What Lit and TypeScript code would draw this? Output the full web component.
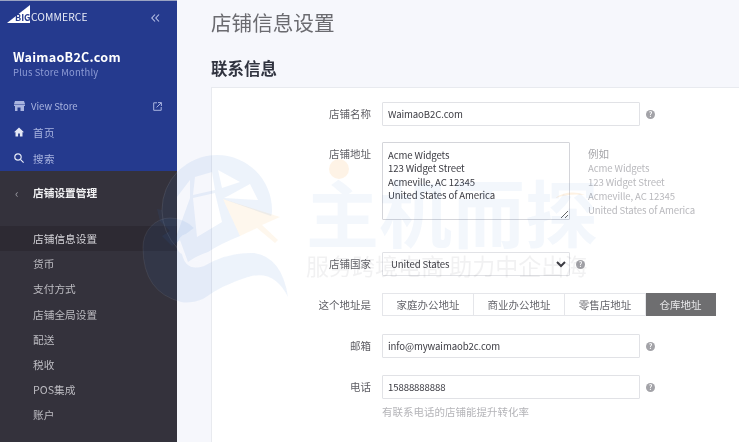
import { LitElement, html, css, svg } from "lit";
import { customElement } from "lit/decorators.js";

const FONT = `"Noto Sans CJK SC", "Noto Sans", sans-serif`;

const watermark = svg`
  <svg class="globe" width="739" height="442" viewBox="0 0 739 442" aria-hidden="true">
    <circle cx="217" cy="210" r="55" fill="none" stroke="#fff" stroke-opacity=".09"/>
    <path fill="#2b78d0" fill-opacity=".085" fill-rule="evenodd" d="M162 210a55 55 0 1 1 110 0q0 5-1 6l-48-17 17 37q-20 8-32 16-12 4-20 10l-8-22-8 6-10-10 8-5-10-10-3-12zM195 177l17-5 3 18-22 5zM218 170l22 12-18 6zM230 195l20-11 8 16-34-2zM193 198l22-5 7 29-25 15zM177 197l13-17v18l-14 39z"/>
    <path fill="#2b78d0" fill-opacity=".085" stroke="#fff" stroke-opacity=".07" d="M143 248a27 29 0 0 1 27-30q14 0 24 10l-8 6q-8 2-9 12 0 6 5 8 4 18 22 12 24-14 50-13 28 4 34 44-14-28-40-20-26 8-45 22-12 5-22 3-38-10-38-54z"/>
    <path fill="#f6a13a" fill-opacity=".09" d="M223 199l57 18-18 8 16 15-3 3-18-15-17 8z"/>
    <circle cx="339" cy="169" r="10" fill="#f6a13a" fill-opacity=".13"/>
    <path fill="#f6a13a" fill-opacity=".14" d="M555 198q14-9 30-3-16-2-30 3z"/>
  </svg>`;

@customElement("app-root")
export class AppRoot extends LitElement {
  static styles = css`
    :host { display: block; width: 739px; height: 442px; overflow: hidden; position: relative; font-family: ${css([FONT] as any)}; filter: blur(.3px); }
    * { box-sizing: border-box; }
    .page { display: flex; height: 442px; background: #f6f7fc; }
    .side { width: 177px; flex: none; display: flex; flex-direction: column; background: #34323c; }
    .blue { height: 171px; background: #253a8e; border-top: 1px solid #9aa3c2; display: flex; flex-direction: column; color: #fff; }
    .brand { display: flex; align-items: center; justify-content: space-between; height: 29px; margin-top: 2px; padding: 0 17px 0 6px; }
    .logo { position: relative; display: flex; align-items: center; width: 90px; height: 20px; }
    .logo svg { position: absolute; left: 1px; top: -3px; }
    .big { position: relative; margin-left: 9px; width: 16px; font-size: 9px; font-weight: 700; color: #253a8e; line-height: 1; }
    .com { position: relative; font-size: 10.3px; letter-spacing: .1px; line-height: 1; color: #e8ebf6; }
    .store { margin: 16px 0 0 13px; font-size: 12.6px; font-weight: 700; line-height: 18px; letter-spacing: .25px; }
    .plan { margin: 0 0 0 13px; font-size: 9.4px; line-height: 12px; color: #8f9dd6; letter-spacing: .2px; }
    .nav { display: flex; align-items: center; gap: 6px; padding: 0 15px 0 14px; height: 26px; color: #a9b4e0; font-size: 9.5px; }
    .nav.first { margin-top: 15px; }
    .nav.cn { gap: 9px; letter-spacing: .4px; font-size: 10.5px; }
    .nav .ext { margin-left: auto; }
    .sub { display: flex; flex-direction: column; }
    .head { display: flex; align-items: center; height: 43px; margin-bottom: 12px; color: #f0f0f2; font-size: 10.7px; font-weight: 700; }
    .back { width: 33px; padding-left: 15px; color: #98979f; font-size: 12px; font-weight: 400; }
    .item { height: 25.2px; padding-left: 33px; display: flex; align-items: center; font-size: 10.7px; color: #bdbcc2; }
    .item.on { background: #2d2a33; color: #d4d3d8; }
    .main { flex: 1; padding-left: 34px; min-width: 0; display: flex; flex-direction: column; }
    h1 { margin: 0; height: 47px; font-size: 20.6px; line-height: 44px; font-weight: 400; color: #6b6b70; }
    h2 { margin: 8px 0 0; height: 32px; font-size: 16.5px; line-height: 26px; font-weight: 700; color: #313440; }
    .card { flex: 1; background: #fff; border: 1px solid #e8eaef; border-width: 1px 0 0 1px; padding-top: 14px; }
    .row { display: flex; align-items: flex-start; }
    .label { width: 159px; margin-right: 11px; flex: none; text-align: right; font-size: 10.5px; line-height: 24px; color: #5e5e64; }
    .input, .area, select { border: 1px solid #e1e2e6; border-radius: 1px; font: inherit; color: #3b3b42; background: transparent; letter-spacing: -.1px; }
    .input { height: 24px; padding: 0 5px; font-size: 9.6px; line-height: 22px; }
    .wide { width: 258px; }
    .area { width: 188px; height: 78px; margin: 0; padding: 6px 5px; font-size: 9.6px; line-height: 13.4px; color: #3b3b42; resize: vertical; display: block; outline: none; overflow: hidden; font-family: inherit; border-color: #d4d5da; }
    select { width: 188px; height: 24px; padding: 0 4px; font-size: 9.6px; font-family: inherit; }
    .help { flex: none; display: inline-flex; align-items: center; justify-content: center; width: 9px; height: 9px; border-radius: 50%; background: #a3a3a8; color: #fff; font-size: 7px; font-weight: 700; line-height: 1; }
    .help.w, .help.i { margin: 8px 0 0 6px; }
    .eg { margin-left: 18px; font-size: 9.6px; line-height: 14px; letter-spacing: -.1px; color: #b9b9bd; padding-top: 5px; }
    .eg b { display: block; font-size: 10.5px; font-weight: 400; color: #a4a4a8; }
    .seg { display: flex; height: 23px; }
    .seg span { display: flex; align-items: center; justify-content: center; height: 23px; border: 1px solid #e5e6ea; border-left: 0; font-size: 10.5px; color: #66666c; }
    .seg span:first-child { border-left: 1px solid #e5e6ea; }
    .seg .on { background: #6e6e70; border-color: #6e6e70; color: #e8e8ea; }
    .r1 { margin-bottom: 16px; }
    .r2 { margin-bottom: 32px; }
    .r3 { margin-bottom: 17px; }
    .r4 { margin-bottom: 17px; }
    .r5 { margin-bottom: 17px; }
    .hint { margin: 6px 0 0 170px; font-size: 10.5px; line-height: 14px; color: #b5b5b9; }
    .over { position: absolute; inset: 0; pointer-events: none; }
    .globe { position: absolute; left: 0; top: 0; }
    .mark { position: absolute; left: 306px; top: 160px; font-size: 73px; line-height: 100px; font-weight: 700; color: rgba(43,120,208,.06); white-space: nowrap; }
    .tag { position: absolute; left: 306px; top: 250px; font-size: 23px; line-height: 30px; color: rgba(120,120,125,.1); white-space: nowrap; }
  `;

  render() {
    return html`
      <div class="page">
        <aside class="side">
          <div class="blue">
            <div class="brand">
              <div class="logo">
                <svg width="24" height="18" viewBox="0 0 24 18"><path fill="#fff" d="M0 18L23 0v18z"/></svg>
                <span class="big">BIG</span><span class="com">COMMERCE</span>
              </div>
              <svg width="9" height="8" viewBox="0 0 9 8" fill="none" stroke="#b9c2e8" stroke-width="1.1"><path d="M4 .5L.8 4 4 7.5M8 .5L4.8 4 8 7.5"/></svg>
            </div>
            <div class="store">WaimaoB2C.com</div>
            <div class="plan">Plus Store Monthly</div>
            <div class="nav first">
              <svg width="11" height="10" viewBox="0 0 11 10" fill="#a9b4e0"><path d="M1 0h9l1 3H0zM0 3.6h11V5H10v5H6.5V6.5h-3V10H1V5H0z"/></svg>
              <span>View Store</span>
              <svg class="ext" width="9" height="9" viewBox="0 0 9 9" fill="none" stroke="#a9b4e0"><path d="M4 .8H.7v7.5h7.5V5M5 .6h3.4V4M8.2.8L3.6 5.4"/></svg>
            </div>
            <div class="nav cn">
              <svg width="10" height="10" viewBox="0 0 10 10" fill="#e4e8f6"><path d="M5 .5L0 5.2h1.5V9.6h2.6V6.5h1.8v3.1h2.6V5.2H10z"/></svg>
              <span>首页</span>
            </div>
            <div class="nav cn">
              <svg width="10" height="10" viewBox="0 0 10 10" fill="none" stroke="#e4e8f6" stroke-width="1.2"><circle cx="4" cy="4" r="3.2"/><path d="M6.4 6.4l3.2 3.2"/></svg>
              <span>搜索</span>
            </div>
          </div>
          <div class="sub">
            <div class="head"><span class="back">‹</span><span>店铺设置管理</span></div>
            <div class="item on">店铺信息设置</div>
            <div class="item">货币</div>
            <div class="item">支付方式</div>
            <div class="item">店铺全局设置</div>
            <div class="item">配送</div>
            <div class="item">税收</div>
            <div class="item">POS集成</div>
            <div class="item">账户</div>
          </div>
        </aside>
        <main class="main">
          <h1>店铺信息设置</h1>
          <h2>联系信息</h2>
          <section class="card">
            <div class="row r1">
              <div class="label">店铺名称</div>
              <div class="input wide">WaimaoB2C.com</div>
              <span class="help w">?</span>
            </div>
            <div class="row r2">
              <div class="label">店铺地址</div>
              <textarea class="area" .value=${"Acme Widgets\n123 Widget Street\nAcmeville, AC 12345\nUnited States of America"}></textarea>
              <div class="eg"><b>例如</b>Acme Widgets<br />123 Widget Street<br />Acmeville, AC 12345<br />United States of America</div>
            </div>
            <div class="row r3">
              <div class="label">店铺国家</div>
              <select><option>United States</option></select>
              <span class="help i">?</span>
            </div>
            <div class="row r4">
              <div class="label">这个地址是</div>
              <div class="seg">
                <span style="width:92px">家庭办公地址</span>
                <span style="width:91px">商业办公地址</span>
                <span style="width:81px">零售店地址</span>
                <span class="on" style="width:70px">仓库地址</span>
              </div>
            </div>
            <div class="row r5">
              <div class="label">邮箱</div>
              <div class="input wide">info@mywaimaob2c.com</div>
              <span class="help w">?</span>
            </div>
            <div class="row">
              <div class="label">电话</div>
              <div class="input wide">15888888888</div>
              <span class="help w">?</span>
            </div>
            <div class="hint">有联系电话的店铺能提升转化率</div>
          </section>
        </main>
      </div>
      <div class="over">
        ${watermark}
        <div class="mark">主机而探</div>
        <div class="tag">服务跨境电商 助力中企出海</div>
      </div>
    `;
  }
}
